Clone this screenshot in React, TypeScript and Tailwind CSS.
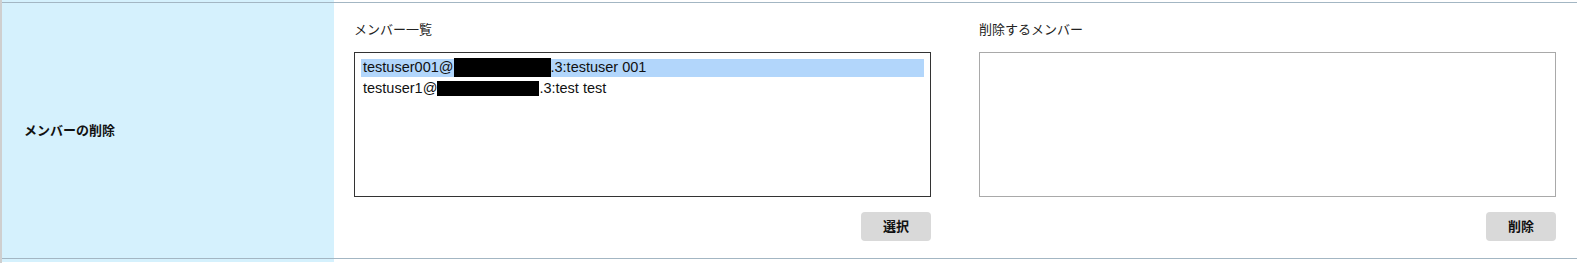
import React from "react";

const font = { fontFamily: '"Liberation Sans", "Noto Sans CJK JP", sans-serif' };

interface MemberOption {
  prefix: string;
  maskWidth: string;
  maskHeight: string;
  suffix: string;
  selected?: boolean;
}

const members: MemberOption[] = [
  { prefix: "testuser001@", maskWidth: "w-[97px]", maskHeight: "h-[19px]", suffix: ".3:testuser 001", selected: true },
  { prefix: "testuser1@", maskWidth: "w-[102px]", maskHeight: "h-[15px]", suffix: ".3:test test" },
];

const ListBox: React.FC<{ dark?: boolean; children?: React.ReactNode }> = ({ dark, children }) => (
  <div
    className={`h-[145px] bg-white border p-[6px] ${dark ? "border-[#333333]" : "border-[#a9a9a9]"}`}
  >
    {children}
  </div>
);

const GrayButton: React.FC<{ children: React.ReactNode }> = ({ children }) => (
  <button className="ml-auto w-[70px] h-[29px] rounded-[4px] bg-[#d9d9d9] text-[13px] font-bold text-[#111]">
    {children}
  </button>
);

export default function App() {
  return (
    <div className="w-[1577px] h-[263px] bg-white border-l-2 border-[#cfcfcf] overflow-hidden" style={font}>
      {/* tail of previous row */}
      <div className="flex h-[2px]">
        <div className="w-[332px] bg-[#d5f1fd]" />
        <div className="flex-1 bg-white" />
      </div>

      <div className="flex border-t border-[#a3b6c3]">
        <div className="w-[332px] shrink-0 bg-[#d5f1fd] flex items-center pl-[22px]">
          <span className="text-[13px] font-bold text-[#111]">メンバーの削除</span>
        </div>

        <div className="flex-1 grid grid-cols-2 gap-x-[48px] pl-[20px] pr-[21px] pt-[17px] pb-[17px]">
          <div className="flex flex-col">
            <div className="h-[20px] leading-[20px] text-[13px] text-[#222] mb-[12px]">メンバー一覧</div>
            <ListBox dark>
              {members.map((m) => (
                <div
                  key={m.prefix}
                  className={`flex items-center h-[18px] mb-[3px] pl-[2px] text-[14.5px] text-[#111] whitespace-nowrap ${
                    m.selected ? "bg-[#b2d6fb]" : ""
                  }`}
                >
                  <span>{m.prefix}</span>
                  <span className={`inline-block bg-black relative -top-[1px] ${m.maskWidth} ${m.maskHeight}`} />
                  <span>{m.suffix}</span>
                </div>
              ))}
            </ListBox>
            <div className="flex mt-[15px]">
              <GrayButton>選択</GrayButton>
            </div>
          </div>

          <div className="flex flex-col">
            <div className="h-[20px] leading-[20px] text-[13px] text-[#222] mb-[12px]">削除するメンバー</div>
            <ListBox />
            <div className="flex mt-[15px]">
              <GrayButton>削除</GrayButton>
            </div>
          </div>
        </div>
      </div>

      <div className="flex h-[4px] border-t border-[#a3b6c3]">
        <div className="w-[332px] bg-[#d5f1fd]" />
        <div className="flex-1 bg-white" />
      </div>
    </div>
  );
}
